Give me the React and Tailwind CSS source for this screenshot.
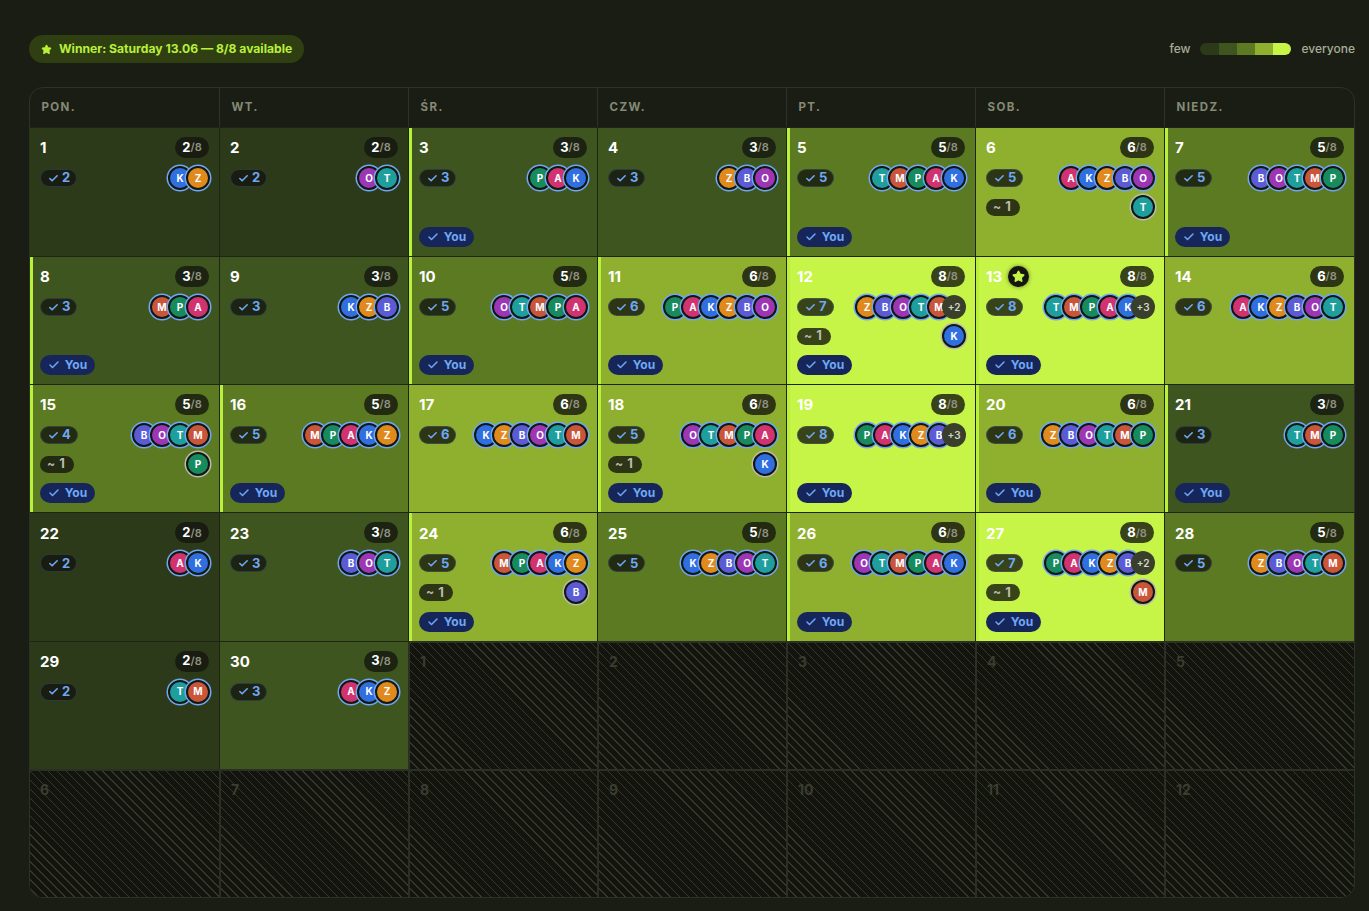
import React from "react";
import { Check, Star } from "lucide-react";

const COLORS = {
  K: "bg-[#2f6fe0]",
  Z: "bg-[#e08a1e]",
  O: "bg-[#9c36b5]",
  T: "bg-[#1f9e9e]",
  P: "bg-[#178a5e]",
  A: "bg-[#d0336f]",
  M: "bg-[#c9563a]",
  B: "bg-[#5b5bd6]",
};

const LEVELS = {
  2: "bg-[#2d3a1a]",
  3: "bg-[#3f5520]",
  5: "bg-[#5b7a22]",
  6: "bg-[#8fb02f]",
  8: "bg-[#c6f548]",
};

const WEEKDAYS = ["PON.", "WT.", "ŚR.", "CZW.", "PT.", "SOB.", "NIEDZ."];

// d = day, n = total, yes = count in the blue pill, a = avatars, more = +N, m = maybe letter
const DAYS = [
  { d: 1, n: 2, yes: 2, a: "KZ" },
  { d: 2, n: 2, yes: 2, a: "OT" },
  { d: 3, n: 3, yes: 3, a: "PAK", you: true },
  { d: 4, n: 3, yes: 3, a: "ZBO" },
  { d: 5, n: 5, yes: 5, a: "TMPAK", you: true },
  { d: 6, n: 6, yes: 5, a: "AKZBO", m: "T" },
  { d: 7, n: 5, yes: 5, a: "BOTMP", you: true },
  { d: 8, n: 3, yes: 3, a: "MPA", you: true },
  { d: 9, n: 3, yes: 3, a: "KZB" },
  { d: 10, n: 5, yes: 5, a: "OTMPA", you: true },
  { d: 11, n: 6, yes: 6, a: "PAKZBO", you: true },
  { d: 12, n: 8, yes: 7, a: "ZBOTM", more: 2, m: "K", you: true },
  { d: 13, n: 8, yes: 8, a: "TMPAK", more: 3, you: true, winner: true },
  { d: 14, n: 6, yes: 6, a: "AKZBOT" },
  { d: 15, n: 5, yes: 4, a: "BOTM", m: "P", you: true },
  { d: 16, n: 5, yes: 5, a: "MPAKZ", you: true },
  { d: 17, n: 6, yes: 6, a: "KZBOTM" },
  { d: 18, n: 6, yes: 5, a: "OTMPA", m: "K", you: true },
  { d: 19, n: 8, yes: 8, a: "PAKZB", more: 3, you: true },
  { d: 20, n: 6, yes: 6, a: "ZBOTMP", you: true },
  { d: 21, n: 3, yes: 3, a: "TMP", you: true },
  { d: 22, n: 2, yes: 2, a: "AK" },
  { d: 23, n: 3, yes: 3, a: "BOT" },
  { d: 24, n: 6, yes: 5, a: "MPAKZ", m: "B", you: true },
  { d: 25, n: 5, yes: 5, a: "KZBOT" },
  { d: 26, n: 6, yes: 6, a: "OTMPAK", you: true },
  { d: 27, n: 8, yes: 7, a: "PAKZB", more: 2, m: "M", you: true },
  { d: 28, n: 5, yes: 5, a: "ZBOTM" },
  { d: 29, n: 2, yes: 2, a: "TM" },
  { d: 30, n: 3, yes: 3, a: "AKZ" },
];

const OUTSIDE = [1, 2, 3, 4, 5, 6, 7, 8, 9, 10, 11, 12];

function Avatar({ letter, maybe }) {
  return (
    <div
      className={`relative w-6 h-6 -ml-[6px] first:ml-0 rounded-full border-2 border-[#14170f] flex items-center justify-center text-[10px] font-bold text-white ${
        COLORS[letter]
      } ${maybe ? "ring-[1.5px] ring-[#b9bcae]" : "ring-[1.5px] ring-[#6ea8f5]"}`}
    >
      {letter}
    </div>
  );
}

function DayCell({ day }) {
  return (
    <div
      className={`flex flex-col min-w-0 border-l border-t border-[#1e2512] [&:nth-child(7n+1)]:border-l-0 pl-[10px] pr-[10px] pt-[9px] pb-[9px] ${
        LEVELS[day.n]
      } ${day.you ? "shadow-[inset_3px_0_0_#b9f03a]" : ""}`}
    >
      <div className="flex items-center justify-between h-[21px]">
        <div className="flex items-center gap-[6px]">
          <span className="block pt-[2px] text-[15px] font-bold text-white">{day.d}</span>
          {day.winner && (
            <span className="w-[21px] h-[21px] rounded-full bg-[#14170f] flex items-center justify-center shadow-[0_0_4px_#14170f88]">
              <Star size={13} className="text-[#c6f548] fill-[#c6f548]" />
            </span>
          )}
        </div>
        <div className="h-[21px] w-[34px] rounded-full bg-[#14170fcc] flex items-center justify-center text-[13px] font-bold text-white">
          {day.n}
          <span className="text-[11px] font-semibold text-[#8f9283]">/8</span>
        </div>
      </div>

      <div className="flex items-center justify-between h-[26px] mt-[7px]">
        <div className="h-[18px] min-w-[36px] pl-[7px] pr-[6px] rounded-full bg-[#14170fcc] border border-[#6ea8f533] flex items-center gap-[3px] text-[13px] font-bold text-[#6ea8f5]">
          <Check size={11} strokeWidth={3.5} />
          {day.yes}
        </div>
        <div className="flex items-center -mr-px">
          {day.a.split("").map((l) => (
            <Avatar key={l} letter={l} />
          ))}
          {day.more && (
            <div className="relative w-6 h-6 -ml-[9px] rounded-full bg-[#3a3f2c] flex items-center justify-center text-[10px] font-semibold text-[#d5d7c8]">
              +{day.more}
            </div>
          )}
        </div>
      </div>

      {day.m && (
        <div className="flex items-center justify-between h-[26px] mt-[3px]">
          <div className="h-[17px] min-w-[34px] pl-[7px] pr-[6px] rounded-full bg-[#14170fcc] flex items-center gap-1 text-[13px] font-bold text-[#b9bcae]">
            <span className="text-[12px] leading-none">~</span>
            1
          </div>
          <div className="-mr-px">
            <Avatar letter={day.m} maybe />
          </div>
        </div>
      )}

      {day.you && (
        <div className="mt-auto self-start h-5 w-[55px] rounded-full bg-[#16265a] flex items-center justify-center gap-[5px] text-xs font-bold text-[#6ea8f5]">
          <Check size={12} strokeWidth={3} />
          You
        </div>
      )}
    </div>
  );
}

function OutsideCell({ day }) {
  return (
    <div className="border-l-2 border-t-2 border-[#2c2f24] [&:nth-child(7n+1)]:border-l-0 pl-[10px] pt-[8px] text-[14px] font-bold text-[#3a3d30] bg-[#12140d] bg-[repeating-linear-gradient(45deg,#12140d_0px,#12140d_5.4px,#34372b_5.4px,#34372b_6.4px)]">
      {day}
    </div>
  );
}

export default function App() {
  return (
    <div className="min-h-[911px] bg-[#1a1d14] pl-[29px] pr-[14px] pt-[35px] font-[Inter,sans-serif]">
      <div className="flex items-center justify-between h-7">
        <div className="h-7 px-3 rounded-full bg-[#2f3f12] flex items-center gap-[7px] text-[12.15px] font-bold text-[#b9f03a]">
          <Star size={11} className="fill-[#b9f03a]" />
          Winner: Saturday 13.06 — 8/8 available
        </div>
        <div className="flex items-center gap-[10px] text-xs font-medium text-[#a8ad98]">
          few
          <div className="flex w-[91px] h-3 rounded-full overflow-hidden">
            <div className="flex-1 bg-[#2d3a1a]"></div>
            <div className="flex-1 bg-[#3f5520]"></div>
            <div className="flex-1 bg-[#5b7a22]"></div>
            <div className="flex-1 bg-[#8fb02f]"></div>
            <div className="flex-1 bg-[#c6f548]"></div>
          </div>
          everyone
        </div>
      </div>

      <div className="mt-6 h-[811px] flex flex-col border border-[#2e3226] rounded-[14px] overflow-hidden">
        <div className="grid grid-cols-[repeat(6,189px)_1fr] h-[39px] shrink-0">
          {WEEKDAYS.map((w) => (
            <div
              key={w}
              className="flex items-center pl-[11.5px] border-l border-[#2e3226] first:border-l-0 text-[11.5px] font-bold tracking-[1.4px] text-[#858a75]"
            >
              {w}
            </div>
          ))}
        </div>
        <div className="flex-1 grid grid-cols-[repeat(6,189px)_1fr] grid-rows-[129px_repeat(5,1fr)]">
          {DAYS.map((day) => (
            <DayCell key={day.d} day={day} />
          ))}
          {OUTSIDE.map((d) => (
            <OutsideCell key={d} day={d} />
          ))}
        </div>
      </div>
    </div>
  );
}
